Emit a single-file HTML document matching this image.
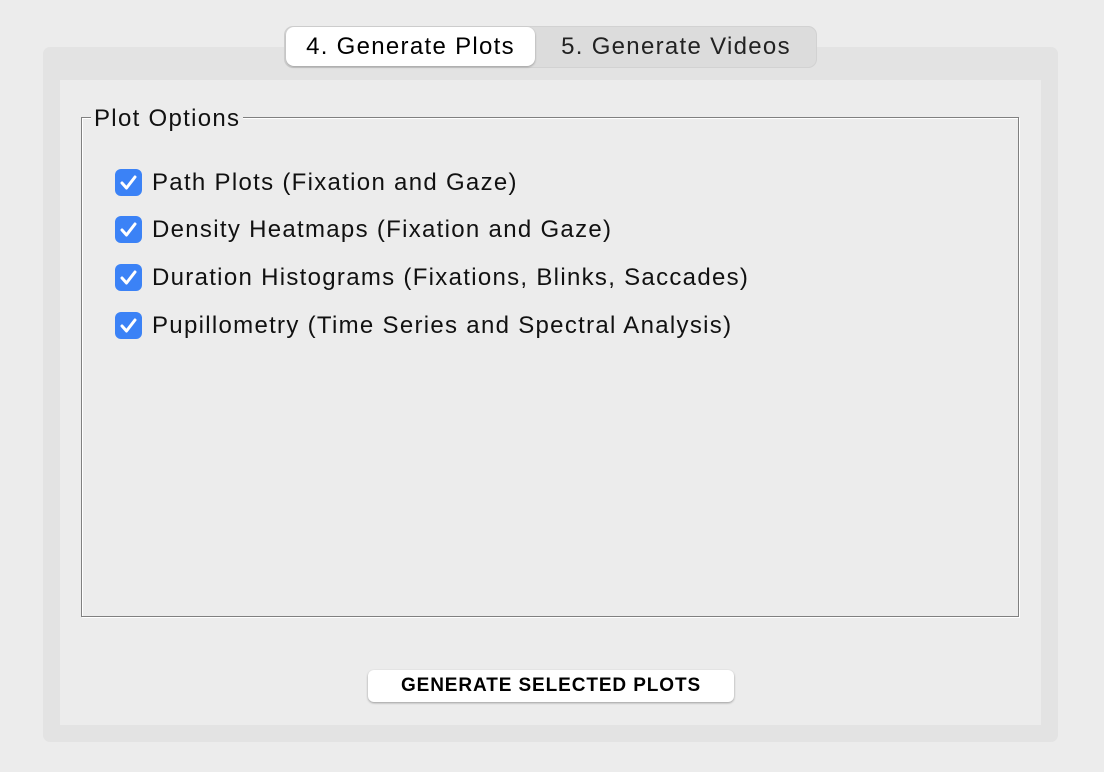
<!DOCTYPE html>
<html><head><style>
body{margin:0;width:1104px;height:772px;background:#ececec;position:relative;overflow:hidden;font-family:"Liberation Sans",sans-serif;}
.outer{position:absolute;left:43px;top:47px;width:1015px;height:695px;background:#e3e3e3;border-radius:7px;}
.inner{position:absolute;left:60px;top:80px;width:981px;height:645px;background:#ececec;}
.seg{position:absolute;left:284px;top:26px;width:533px;height:42px;background:#dcdcdc;border-radius:9px;box-shadow:inset 0 0 0 1px #d2d2d2;}
.tab{position:absolute;top:0;height:42px;line-height:42px;font-size:24px;letter-spacing:1.3px;color:#222;text-align:center;}
.sel{left:2px;top:1px;height:39px;line-height:39px;width:249px;background:#fff;border-radius:8px;box-shadow:0 1px 2px rgba(0,0,0,.3);color:#000;}
.grp{position:absolute;left:81px;top:117px;width:936px;height:498px;border:1px solid #808080;box-shadow:1px 1px 0 #fff, inset 1px 1px 0 #fff;}
.lbl{position:absolute;left:91px;top:105px;font-size:24px;letter-spacing:1.3px;background:#ececec;padding:0 3px;color:#111;}
.row{position:absolute;left:115px;height:26px;font-size:24px;letter-spacing:1.3px;color:#111;}
.cb{position:absolute;left:0;top:0;width:27px;height:27px;background:#3b82f6;border-radius:6px;}
.row span{position:absolute;left:37px;top:0px;white-space:nowrap;line-height:28px;}
.btn{position:absolute;left:368px;top:670px;width:366px;height:32px;background:#fff;border-radius:6px;box-shadow:0 1px 2px rgba(0,0,0,.35);font-weight:bold;font-size:19px;letter-spacing:0.9px;text-align:center;line-height:32px;color:#000;}
</style></head><body>
<div class="outer"></div>
<div class="inner"></div>
<div class="seg">
<div class="tab sel">4. Generate Plots</div>
<div class="tab" style="left:251px;width:282px;">5. Generate Videos</div>
</div>
<div class="grp"></div>
<div class="lbl">Plot Options</div>
<div class="row" style="top:169px"><div class="cb"><svg width="27" height="27"><path d="M7 14l4.5 5L20 8" stroke="#fff" stroke-width="3" fill="none" stroke-linecap="round" stroke-linejoin="round"/></svg></div><span>Path Plots (Fixation and Gaze)</span></div>
<div class="row" style="top:216px"><div class="cb"><svg width="27" height="27"><path d="M7 14l4.5 5L20 8" stroke="#fff" stroke-width="3" fill="none" stroke-linecap="round" stroke-linejoin="round"/></svg></div><span>Density Heatmaps (Fixation and Gaze)</span></div>
<div class="row" style="top:264px"><div class="cb"><svg width="27" height="27"><path d="M7 14l4.5 5L20 8" stroke="#fff" stroke-width="3" fill="none" stroke-linecap="round" stroke-linejoin="round"/></svg></div><span>Duration Histograms (Fixations, Blinks, Saccades)</span></div>
<div class="row" style="top:312px"><div class="cb"><svg width="27" height="27"><path d="M7 14l4.5 5L20 8" stroke="#fff" stroke-width="3" fill="none" stroke-linecap="round" stroke-linejoin="round"/></svg></div><span>Pupillometry (Time Series and Spectral Analysis)</span></div>
<div class="btn">GENERATE SELECTED PLOTS</div>
</body></html>
